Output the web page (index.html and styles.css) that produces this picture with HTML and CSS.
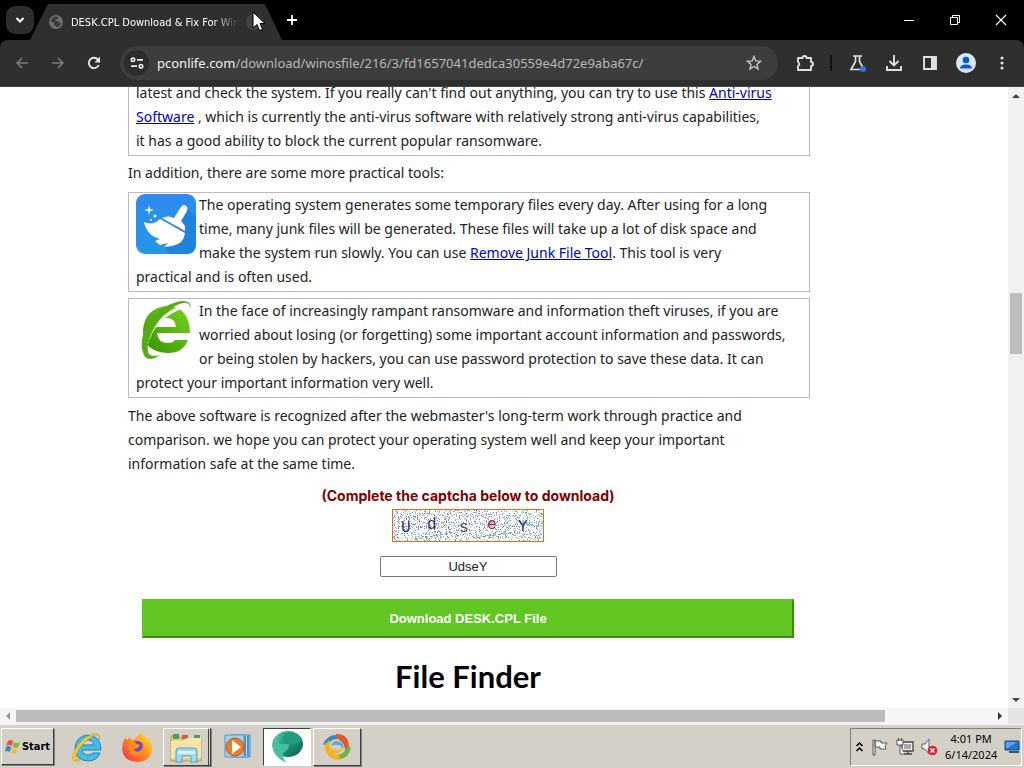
FILE: index.html
```html
<!DOCTYPE html>
<html lang="en">
<head>
    <meta charset="UTF-8">
    <meta name="viewport" content="width=device-width, initial-scale=1.0">
    <title>DESK.CPL Download &amp; Fix For Windows</title>
    <link rel="stylesheet" href="styles.css">
</head>
<body>
    <header class="tabstrip">
        <button class="tab-search" aria-label="Search tabs">
            <svg width="10" height="10" viewBox="0 0 10 10"><path d="M1.500 3l3.500 3.500L8.500 3" fill="none" stroke="#fff" stroke-width="2"/></svg>
        </button>
        <div class="tab">
            <svg width="14" height="14" viewBox="0 0 14 14"><circle cx="7" cy="7" r="6.200" fill="#3c3c3c" stroke="#707274" stroke-width="1.500"/><path d="M1 6l4 2v2l2 1v2.500C3 13 1 10 1 6zM5 1.500h4.500L9 4 7 4.500 6.500 6H9l1.500 2h2.500c.5-3-1.500-6-4-6.500z" fill="#707274"/></svg>
            <span class="tab-title">DESK.CPL Download &amp; Fix For Win</span>
            <button class="tab-close" aria-label="Close tab"></button>
            <svg class="cursor" width="14" height="21" viewBox="0 0 14 21"><path d="M1 1v16l4-3.500 2.500 6 3-1.200L8 12.500h5z" fill="#fff" stroke="#000" stroke-width="1"/></svg>
        </div>
        <button class="new-tab" aria-label="New tab">
            <svg width="12" height="12" viewBox="0 0 12 12"><path d="M6 1v10M1 6h10" stroke="#fff" stroke-width="1.800"/></svg>
        </button>
        <div class="window-buttons">
            <button aria-label="Minimize"><svg width="12" height="12" viewBox="0 0 12 12"><path d="M1 6.500h10" stroke="#fff"/></svg></button>
            <button aria-label="Restore"><svg width="12" height="12" viewBox="0 0 12 12"><path d="M1.500 3.500h7v7h-7zM3.500 3.500v-2h7v7h-2" fill="none" stroke="#fff"/></svg></button>
            <button aria-label="Close"><svg width="12" height="12" viewBox="0 0 12 12"><path d="M1 1l10 10M11 1L1 11" stroke="#fff" stroke-width="1.200"/></svg></button>
        </div>
    </header>

    <nav class="toolbar">
        <div class="nav-buttons">
            <button aria-label="Back"><svg width="14" height="14" viewBox="0 0 14 14"><path d="M13 7H2M7 2L2 7l5 5" fill="none" stroke="#77797b" stroke-width="1.600"/></svg></button>
            <button aria-label="Forward"><svg width="14" height="14" viewBox="0 0 14 14"><path d="M1 7h11M7 2l5 5-5 5" fill="none" stroke="#77797b" stroke-width="1.600"/></svg></button>
            <button aria-label="Reload"><svg width="14" height="14" viewBox="0 0 14 14"><path d="M11.800 9A5.200 5.200 0 1 1 11 3.600" fill="none" stroke="#e8e8e8" stroke-width="1.900"/><path d="M13 .5v6H7.500z" fill="#e8e8e8"/></svg></button>
        </div>
        <div class="address">
            <button class="site-info" aria-label="Site information"><svg width="14" height="12" viewBox="0 0 14 12" fill="none" stroke="#e8e8e8" stroke-width="1.700"><circle cx="3" cy="2.800" r="1.700"/><path d="M7 2.800h6M1 9.200h6"/><circle cx="11" cy="9.200" r="1.700"/></svg></button>
            <span class="url">pconlife.com<span class="path">/download/winosfile/216/3/fd1657041dedca30559e4d72e9aba67c/</span></span>
            <button class="star" aria-label="Bookmark"><svg width="16" height="16" viewBox="0 0 16 16"><path d="M8 1.500l1.800 4.400 4.700.4-3.600 3.100 1.100 4.600-4-2.500-4 2.500 1.100-4.600-3.600-3.100 4.700-.4z" fill="none" stroke="#c7c7c7" stroke-width="1.400"/></svg></button>
        </div>
        <div class="tools">
            <button aria-label="Extensions"><svg width="18" height="18" viewBox="0 0 18 18"><path d="M2 4h4.500a2 2 0 0 1 4 0H15v4a2 2 0 0 1 0 4v4H2v-4a2.200 2.200 0 0 0 0-4z" fill="none" stroke="#e0e0e0" stroke-width="1.900" stroke-linejoin="round"/></svg></button>
            <span class="divider"></span>
            <button aria-label="Experiments"><svg width="18" height="18" viewBox="0 0 18 18"><path d="M4 2h9M6.500 2v5.500L2 15.500h13L10.500 7.500V2" fill="none" stroke="#e0e0e0" stroke-width="1.700"/><circle cx="14" cy="15" r="3" fill="#3f6fe0"/></svg></button>
            <button aria-label="Downloads"><svg width="18" height="18" viewBox="0 0 18 18"><path d="M9 1v10M4.500 7L9 11.500 13.500 7M2 12v4h14v-4" fill="none" stroke="#e0e0e0" stroke-width="1.900"/></svg></button>
            <button aria-label="Side panel"><svg width="18" height="18" viewBox="0 0 18 18"><path d="M3 3h12v12H3z" fill="none" stroke="#e0e0e0" stroke-width="1.900"/><path d="M10 3h5v12h-5z" fill="#e0e0e0"/></svg></button>
            <button aria-label="Profile"><svg width="20" height="20" viewBox="0 0 20 20"><circle cx="10" cy="10" r="10" fill="#dbe6fa"/><circle cx="10" cy="7" r="3.300" fill="#0b57d0"/><path d="M4 15.500c0-5.500 12-5.500 12 0z" fill="#0b57d0"/></svg></button>
            <button aria-label="Menu"><svg width="18" height="18" viewBox="0 0 18 18" fill="#e0e0e0"><circle cx="9" cy="4" r="1.600"/><circle cx="9" cy="9" r="1.600"/><circle cx="9" cy="14" r="1.600"/></svg></button>
        </div>
    </nav>

    <div class="viewport">
        <main class="page">
            <p class="box first">latest and check the system. If you really can't find out anything, you can try to use this <a href="#">Anti-virus<br>Software</a> , which is currently the anti-virus software with relatively strong anti-virus capabilities,<br>it has a good ability to block the current popular ransomware.</p>
            <p>In addition, there are some more practical tools:</p>
            <div class="box">
                <svg class="logo" width="60" height="60" viewBox="0 0 60 60">
                    <defs><linearGradient id="sky" x1="0" y1="0" x2="0" y2="1"><stop offset="0" stop-color="#2f8af0"/><stop offset="1" stop-color="#2497ea"/></linearGradient></defs>
                    <rect width="60" height="60" rx="9" fill="url(#sky)"/>
                    <path d="M51 14l9 9v28q0 9-9 9H34L26 50z" fill="#1473cf" opacity=".5"/>
                    <path d="M45 13q3-4 6 0 1 2 0 4l-6 10q5 4 4 10L26 24q6-3 12 0z" fill="#fff"/>
                    <path d="M24 25l25 14q-1 11-13 13l-8 1 4-4-8 2-5-4 5-2q-13-3-16-17 9 4 16-3z" fill="#fff"/>
                    <path d="M13 11l1 4 4 1-4 1-1 4-1-4-4-1 4-1z" fill="#fff"/><circle cx="19" cy="22" r="1.500" fill="#fff"/><circle cx="15" cy="26" r="1" fill="#fff"/>
                </svg>
                The operating system generates some temporary files every day. After using for a long<br>time, many junk files will be generated. These files will take up a lot of disk space and<br>make the system run slowly. You can use <a href="#">Remove Junk File Tool</a>. This tool is very<br>practical and is often used.
            </div>
            <div class="box">
                <svg class="logo" width="60" height="60" viewBox="0 0 60 60">
                    <defs><linearGradient id="leaf" x1="1" y1="0" x2="0" y2="1"><stop offset="0" stop-color="#7ed321"/><stop offset="1" stop-color="#2f9200"/></linearGradient></defs>
                    <path d="M54 33H21q1 10 11 10 5 0 7-3h13q-5 13-20 13Q7 52 7 30 9 8 31 6q22 0 23 27zM21 27h19q-1-9-9-9-9 0-10 9z" fill="url(#leaf)"/>
                    <path d="M10 46Q16 17 51 5" fill="none" stroke="#fff" stroke-width="3"/>
                    <path d="M55 8Q55 0 45 1 24 5 12 23 1 43 9 57q5 5 15-2-10 3-12-3-2-11 8-27Q33 6 47 3q6-1 8 5z" fill="#55ad16"/>
                </svg>
                In the face of increasingly rampant ransomware and information theft viruses, if you are<br>worried about losing (or forgetting) some important account information and passwords,<br>or being stolen by hackers, you can use password protection to save these data. It can<br>protect your important information very well.
            </div>
            <p>The above software is recognized after the webmaster's long-term work through practice and<br>comparison. we hope you can protect your operating system well and keep your important<br>information safe at the same time.</p>
            <form class="download">
                <label for="captcha">(Complete the captcha below to download)</label>
                <svg class="captcha" width="152" height="33" viewBox="0 0 150 31">
                    <filter id="speckle" x="0" y="0" width="1" height="1" color-interpolation-filters="sRGB"><feTurbulence type="fractalNoise" baseFrequency=".9" numOctaves="2" seed="4"/><feColorMatrix values="2 0 0 0 -.85 0 2 0 0 -.7 0 0 2 0 -.5 0 0 0 14 -7.800"/></filter>
                    <rect width="150" height="31" fill="#fff"/>
                    <rect width="150" height="31" filter="url(#speckle)" opacity=".6"/>
                    <path d="M22 29l20-3 20-4M80 28l38-5M128 13l20 4" stroke="#38a8b8" stroke-dasharray="3 2" fill="none"/>
                    <g class="captcha-text"><text x="8" y="22" fill="#30308c">U</text><text x="34" y="19" fill="#303080">d</text><text x="66" y="22" fill="#405060">s</text><text x="94" y="19" fill="#a02828">e</text><text x="125" y="21" fill="#303068">Y</text></g>
                </svg>
                <input id="captcha" type="text" value="UdseY">
                <button type="button" class="download-btn">Download DESK.CPL File</button>
            </form>
            <h1>File Finder</h1>
        </main>
        <div class="vscroll">
            <svg width="16" height="17" viewBox="0 0 16 17"><path d="M4 11l4-4 4 4z" fill="#444"/></svg>
            <div class="vtrack"><div class="vthumb"></div></div>
            <svg width="16" height="17" viewBox="0 0 16 17"><path d="M4 7l4 4 4-4z" fill="#444"/></svg>
        </div>
        <div class="hscroll">
            <svg width="16" height="16" viewBox="0 0 16 16"><path d="M10 4L6 8l4 4z" fill="#999"/></svg>
            <div class="htrack"><div class="hthumb"></div></div>
            <svg width="16" height="16" viewBox="0 0 16 16"><path d="M6 4l4 4-4 4z" fill="#333"/></svg>
        </div>
        <div class="corner"></div>
    </div>

    <footer class="taskbar">
        <button class="start">
            <svg width="16" height="16" viewBox="0 0 16 16"><path d="M3 2q3-2 5 0L7 7Q4 5 1 7z" fill="#e8562a"/><path d="M9 3q3 2 6 0l-2 5q-3 1-5 0z" fill="#7fb93c"/><path d="M1 8q3-2 5 0l-1 5q-3-2-5 0z" fill="#3c80cc"/><path d="M7 9q3 2 6 0l-2 5q-3 1-5 0z" fill="#f3bd28"/></svg>
            Start
        </button>
        <div class="apps">
            <button aria-label="Internet Explorer"><svg width="32" height="32" viewBox="0 0 32 32"><path d="M30 19H11q1 5 6 5 3 0 5-2h7q-3 8-12 8Q4 29 4 17 5 5 17 4q13 1 13 15zM11 14h12q-1-5-6-5-5 0-6 5z" fill="#45bce8" stroke="#1c82bd"/><path d="M28 9q2-8-6-6Q10 7 4 19 0 27 3 30q3 2 8-2-6 2-6-2 0-6 8-14Q22 3 27 4q2 1 1 5z" fill="#f6c82c" stroke="#c99c20" stroke-width=".6"/></svg></button>
            <button aria-label="Firefox"><svg width="32" height="32" viewBox="0 0 32 32"><defs><linearGradient id="fire" x1="1" y1="0" x2="0" y2="1"><stop offset="0" stop-color="#fff03a"/><stop offset=".5" stop-color="#ff8a1c"/><stop offset="1" stop-color="#ef2858"/></linearGradient></defs><path d="M4 7l2 2 3-3 1 3q6-1 9-8 3 2 4 6l1-2q7 5 7 12-1 14-15 14Q2 30 1 18 1 12 4 7z" fill="url(#fire)"/><circle cx="16" cy="17" r="7" fill="#7246c8"/><path d="M8 12q5-3 8 1l3 1-2 3-4 1q1 4 6 2 4-3 2-8 5 5 1 11-6 5-12 0-4-5-2-11z" fill="#ff8c1c"/></svg></button>
            <button class="raised stacked" aria-label="File Explorer"><svg width="36" height="32" viewBox="0 0 36 32"><path d="M3 5h8l3 3h19v22H3z" fill="#e8cf80" stroke="#b99c48"/><path d="M5 3h6v5H5zM26 4h6v5h-6z" fill="#4c9f57"/><path d="M14 4h6v4h-6z" fill="#d6563f"/><path d="M3 10h12l3-3h15v20H3z" fill="#f7e7a6"/><path d="M8 31V20q0-3 3-3h15q3 0 3 3v11h-6v-6h-9v6z" fill="#a0d8ef" stroke="#4da0c8"/><path d="M10 20h17v3H10z" fill="#d8f1fb"/></svg></button>
            <button aria-label="Media Player"><svg width="32" height="32" viewBox="0 0 32 32"><path d="M10 4h19v22H10z" fill="#b8dcf3" stroke="#388ac4"/><path d="M24 5v20M27 5v20" stroke="#2878b8" stroke-width="1.500"/><path d="M4 4h19v22H4z" fill="#a8d0ed" stroke="#5098ca"/><circle cx="14" cy="16" r="9" fill="#ef7b22" stroke="#bd5d18"/><path d="M11 9l9 7-9 7z" fill="#fff"/></svg></button>
            <button class="pressed" aria-label="Browser"><svg width="34" height="34" viewBox="0 0 34 34"><defs><linearGradient id="sea" x1="0" y1="0" x2="1" y2="1"><stop offset="0" stop-color="#40cda0"/><stop offset="1" stop-color="#075c52"/></linearGradient></defs><ellipse cx="18" cy="14" rx="15" ry="13" fill="url(#sea)"/><path d="M11 4Q2 7 2 16q2 12 15 17-5-5-4-10 6-3 6-9-6 1-10-1-1-5 2-9z" fill="#49bd9c"/><path d="M13 11q9 6 18 0-2-7-11-9-8 1-7 9z" fill="#239b80"/></svg></button>
            <button class="raised" aria-label="Media tool"><svg width="32" height="32" viewBox="0 0 32 32"><path d="M2 13Q8 1 21 5l-4 3Q9 7 7 16z" fill="#3589c7"/><path d="M15 3q14 0 13 15l-4 4q1-11-9-15z" fill="#df5b2b"/><path d="M30 16q-2 14-18 12l3-4q8 0 10-7z" fill="#72b33b"/><path d="M19 29Q3 28 4 13l5-4q-2 12 10 16z" fill="#f0b323"/><path d="M10 15q2-7 9-4 5 2 3 8-1-5-6-5-4 0-6 1z" fill="#5aadd5"/><path d="M10 17q1 6 8 5 4-2 3-5-3 4-11 0z" fill="#f3b433"/></svg></button>
        </div>
        <div class="tray">
            <svg width="9" height="12" viewBox="0 0 9 12"><path d="M1.500 5l3-3 3 3M1.500 10l3-3 3 3" fill="none" stroke="#000" stroke-width="1.500"/></svg>
            <svg width="18" height="18" viewBox="0 0 18 18"><path d="M2 2h2v15H2zM4 3h6v2h6l-2 3 1 3H9V9H4z" fill="#fff" stroke="#555"/></svg>
            <svg width="18" height="18" viewBox="0 0 18 18"><path d="M6 4h11v9H6zM8 16h8M12 13v3" fill="#eee" stroke="#444" stroke-width="1.300"/><path d="M8 6h7v5H8z" fill="#aaa"/><path d="M1 2h6v5H1zM4 7v9h4M2.500 0v3M5.500 0v3" fill="#fff" stroke="#555"/></svg>
            <svg width="18" height="18" viewBox="0 0 18 18"><path d="M2 6h3l4-5v15l-4-5H2z" fill="#eee" stroke="#666"/><circle cx="12.500" cy="12.500" r="4.800" fill="#d92332"/><path d="M10.500 10.500l4 4M14.500 10.500l-4 4" stroke="#fff" stroke-width="1.500"/></svg>
            <div class="clock"><span>4:01 PM</span><span>6/14/2024</span></div>
            <svg width="16" height="14" viewBox="0 0 16 14"><path d="M1 1h14v9H1z" fill="#2474d2" stroke="#174888"/><path d="M2 2h11L4 8H2z" fill="#58a4eb"/><path d="M5 12h10" stroke="#456" stroke-width="2"/></svg>
        </div>
    </footer>
</body>
</html>
```
FILE: styles.css
```css
* { box-sizing: border-box; }
body {
    margin: 0; height: 100vh; display: flex; flex-direction: column; overflow: hidden;
    background-color: #000; font-family: "Noto Sans", sans-serif;
}
button { padding: 0; border: none; background: none; display: flex; align-items: center; justify-content: center; }
svg { display: block; flex: none; }

/* browser frame */
.tabstrip { height: 40px; flex: none; display: flex; align-items: center; padding-left: 6px; }
.tab-search { width: 28px; height: 28px; border-radius: 9px; background-color: #2d2d2d; }
.tab {
    position: relative; width: 252px; height: 36px; align-self: flex-end; margin-left: -4px; padding: 0 20px 0 19px;
    display: flex; align-items: center; gap: 8px;
    background-color: #2f2f2f; clip-path: polygon(18px 0, 235px 0, 100% 100%, 0 100%);
}
.tab-title {
    flex: 1; min-width: 0; overflow: hidden; white-space: nowrap; color: #fff; font-size: 11px;
    font-family: "DejaVu Sans Condensed", sans-serif;
    mask-image: linear-gradient(to right, #000 85%, transparent);
}
.tab-close { width: 16px; height: 16px; border-radius: 8px; background-color: #444; }
.cursor { position: absolute; right: 16px; top: 7px; }
.new-tab { width: 20px; height: 24px; }
.window-buttons { margin-left: auto; display: flex; }
.window-buttons button { width: 46px; height: 40px; }
.toolbar {
    height: 47px; flex: none; display: flex; align-items: center; padding: 0 8px;
    background-color: #2f2f2f; border-radius: 8px 8px 0 0; border-bottom: 1px solid #444;
}
.nav-buttons { display: flex; gap: 8px; }
.nav-buttons button { width: 28px; height: 28px; }
.address {
    flex: 1; height: 34px; margin-left: 12px; padding: 0 16px 0 4px; border-radius: 17px; background-color: #3d3d3d;
    display: flex; align-items: center; gap: 8px;
}
.site-info { width: 25px; height: 26px; border-radius: 13px; background-color: #2d2d2d; }
.url { flex: 1; color: #f3f3f3; font-size: 13px; white-space: nowrap; }
.path { color: #b8b8b8; }
.tools { display: flex; align-items: center; gap: 8px; margin-left: 13px; }
.tools button { width: 28px; height: 28px; }
.divider { width: 2px; height: 16px; margin: 0 4px 0 3px; background-color: #111; }

/* page */
.viewport {
    flex: 1; min-height: 0; display: grid; overflow: hidden; background-color: #fff;
    grid-template-columns: 1fr 16px; grid-template-rows: 1fr 16px;
}
.page {
    min-width: 0; min-height: 0; overflow: hidden; padding: 0 200px 0 128px;
    color: #222; font-size: 14px; line-height: 24px; white-space: nowrap;
}
.page p { margin: 5px 0; }
.page .box { margin: 0 -2px 6px 0; padding: 0 7px 2px; border: 1px solid #bbb; }
.page .first { margin: -7px -2px 5px 0; }
.page .box + p { margin: 5px 0 7px; }
.page a { color: #0000c8; }
.logo { float: left; margin: 1px 3px 0 0; }
.download { display: flex; flex-direction: column; align-items: center; margin-top: 8px; }
.download label { color: #800000; font-family: Inter, sans-serif; font-weight: bold; font-size: 14px; }
.captcha { margin-top: 1px; border: 1px solid #d96f20; }
.captcha-text { font-family: "Liberation Mono", monospace; font-size: 16px; }
.download input {
    width: 177px; height: 21px; margin-top: 14px; padding: 0; border: 1px solid #767676; border-radius: 2px;
    text-align: center; font-family: "Liberation Sans", sans-serif; font-size: 13px; color: #222;
}
.download-btn {
    align-self: stretch; height: 39px; margin: 22px 14px 0; border: 2px solid; border-color: #61c522 #3d8714 #3d8714 #61c522;
    background-color: #61c522; color: #fff; font-family: "Liberation Sans", sans-serif; font-weight: bold; font-size: 13px;
}
.page h1 { margin: 18px 0 0; text-align: center; font-family: Lato, sans-serif; font-size: 31px; line-height: 40px; color: #000; }
.vscroll { display: flex; flex-direction: column; background-color: #f1f1f1; }
.vtrack { flex: 1; padding: 189px 2px 0; }
.vthumb { height: 61px; background-color: #bdbdbd; }
.hscroll { display: flex; background-color: #f6f6f6; }
.htrack { flex: 1; padding: 2px 0; }
.hthumb { width: 89%; height: 12px; background-color: #bcbcbc; }
.corner { background-color: #e4e4e4; }

/* taskbar */
.taskbar {
    height: 44px; flex: none; display: flex; align-items: center; padding: 0 2px 0 1px;
    background-color: #d4d0c8; border-top: 1px solid #f4f2ee;
}
.start, .raised { border: 1px solid; border-color: #fff #404040 #404040 #fff; box-shadow: 1px 1px 0 #808080; }
.start {
    width: 53px; height: 37px; gap: 1px; color: #000;
    font-family: "DejaVu Sans Condensed", sans-serif; font-weight: bold; font-size: 11px;
}
.apps { display: flex; gap: 2px; margin-left: 9px; }
.apps button { width: 48px; height: 38px; }
.apps .stacked { border-right: 3px double #404040; }
.apps .pressed { background-color: #fff; border: 1px solid; border-color: #404040 #fff #fff #404040; }
.tray {
    margin-left: auto; height: 38px; width: 172px; padding: 0 1px 0 4px; display: flex; align-items: center; justify-content: space-between;
    border: 1px solid; border-color: #808080 #fff #fff #808080;
}
.clock { display: flex; flex-direction: column; align-items: center; font-size: 11px; line-height: 16px; color: #000; }
```
